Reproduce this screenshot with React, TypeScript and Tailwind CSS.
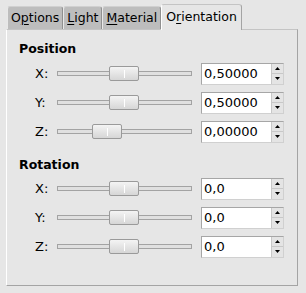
import React from "react";

const font = { fontFamily: '"DejaVu Sans", "Liberation Sans", sans-serif' };

function Tab({ pre, u, post, active }: { pre: string; u: string; post: string; active?: boolean }) {
  if (active) {
    return (
      <div className="relative z-10 -mb-px flex h-[26px] items-center rounded-t-[3px] border border-b-0 border-l-white border-t-[#c4c4c4] border-r-[#a4a4a4] bg-[#e6e6e6] px-[4px] text-[12.5px] text-black">
        {pre}
        <span className="underline underline-offset-2">{u}</span>
        {post}
      </div>
    );
  }
  return (
    <div className="flex h-[23px] items-center rounded-t-[3px] border border-b-0 border-l-[#e8e8e8] border-t-[#d0d0d0] border-r-[#909090] bg-[#bdbdbd] px-[3px] text-[12.5px] text-black">
      {pre}
      <span className="underline underline-offset-2">{u}</span>
      {post}
    </div>
  );
}

function Slider({ pos }: { pos: number }) {
  return (
    <div className="relative h-[15px] w-[135px]">
      <div className="absolute left-0 right-0 top-[5px] h-[5px] border border-[#a3a3a3] bg-[#e0e0e0]" />
      <div
        className="absolute top-0 h-[15px] w-[30px] rounded-[2px] border border-[#9a9a9a] bg-gradient-to-b from-[#f4f4f4] to-[#d6d6d6]"
        style={{ left: pos }}
      >
        <div className="absolute left-[14px] top-[3px] h-[8px] w-px bg-white" />
      </div>
    </div>
  );
}

function Spin({ value }: { value: string }) {
  return (
    <div className="flex h-[22px] w-[83px] border border-[#a6a6a6] border-b-[#d0d0d0] border-r-[#d0d0d0] bg-white">
      <div className="flex flex-1 items-center pl-[2px] text-[13px] text-black">{value}</div>
      <div className="flex w-[12px] flex-col border-l border-[#c8c8c8] bg-[#e4e4e4]">
        <div className="flex flex-1 items-center justify-center border-b border-[#c8c8c8]">
          <svg width="5" height="3" viewBox="0 0 5 3"><polygon points="2.5,0 5,3 0,3" fill="#000" /></svg>
        </div>
        <div className="flex flex-1 items-center justify-center">
          <svg width="5" height="3" viewBox="0 0 5 3"><polygon points="0,0 5,0 2.5,3" fill="#000" /></svg>
        </div>
      </div>
    </div>
  );
}

function Row({ label, pos, value }: { label: string; pos: number; value: string }) {
  return (
    <div className="flex h-[29px] items-center pl-[16px]">
      <div className="w-[22px] text-[13px] text-black">{label}</div>
      <Slider pos={pos} />
      <div className="ml-[9px]">
        <Spin value={value} />
      </div>
    </div>
  );
}

export default function App() {
  return (
    <div className="h-[293px] w-[306px] bg-[#e6e6e6]" style={font}>
      <div className="flex items-end pl-[7px] pt-[4px]">
        <Tab pre="O" u="p" post="tions" />
        <Tab pre="" u="L" post="ight" />
        <Tab pre="" u="M" post="aterial" />
        <Tab pre="O" u="r" post="ientation" active />
      </div>
      <div className="ml-[6px] h-[257px] w-[292px] border border-l-white border-t-[#c4c4c4] border-r-[#a4a4a4] border-b-[#a4a4a4] pl-[12px] pt-[11px]">
        <div className="text-[12.5px] font-bold leading-[15px] text-black">Position</div>
        <div className="mt-[3px]">
          <Row label="X:" pos={52} value="0,50000" />
          <Row label="Y:" pos={52} value="0,50000" />
          <Row label="Z:" pos={35} value="0,00000" />
        </div>
        <div className="mt-[11px] text-[12.5px] font-bold leading-[15px] text-black">Rotation</div>
        <div className="mt-[2px]">
          <Row label="X:" pos={52} value="0,0" />
          <Row label="Y:" pos={52} value="0,0" />
          <Row label="Z:" pos={52} value="0,0" />
        </div>
      </div>
    </div>
  );
}
